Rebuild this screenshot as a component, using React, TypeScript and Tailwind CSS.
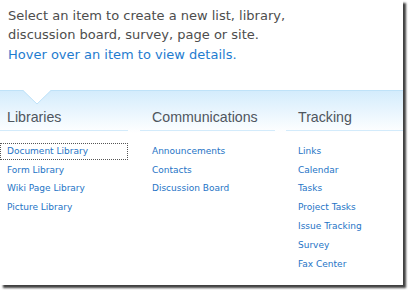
const libraries = ["Document Library", "Form Library", "Wiki Page Library", "Picture Library"];
const communications = ["Announcements", "Contacts", "Discussion Board"];
const tracking = ["Links", "Calendar", "Tasks", "Project Tasks", "Issue Tracking", "Survey", "Fax Center"];

function Column({
  title,
  items,
  width,
  pad,
  linkPad,
  focusFirst,
}: {
  title: string;
  items: string[];
  width: string;
  pad: string;
  linkPad: string;
  focusFirst?: boolean;
}) {
  return (
    <div className={`${width} shrink-0`}>
      <div
        className={`h-[40px] flex items-end ${pad} pb-[4px] border-b border-[#d3ebfb] text-[14.2px] leading-[18px] text-[#4f565e]`}
        style={{ fontFamily: '"Liberation Sans", Arial, sans-serif' }}
      >
        {title}
      </div>
      <ul className="pt-[12px]">
        {items.map((item, i) => (
          <li
            key={item}
            className={`h-[17px] mb-[1.8px] ${linkPad} flex items-center text-[9px] text-[#2574c6] border ${
              focusFirst && i === 0 ? "border-dotted border-[#555]" : "border-transparent"
            }`}
          >
            {item}
          </li>
        ))}
      </ul>
    </div>
  );
}

export default function App() {
  return (
    <div className="w-[408px] h-[290px] bg-white overflow-hidden" style={{ fontFamily: '"DejaVu Sans", Verdana, sans-serif' }}>
      <div className="relative w-[403px] h-[285px] bg-white shadow-[3px_3px_2px_rgba(0,0,0,0.75)]">
        <div className="h-[90px] pl-[8px] pt-[6px] text-[13px] leading-[19.3px] text-[#4d4d4d]">
          <p>Select an item to create a new list, library,</p>
          <p>discussion board, survey, page or site.</p>
          <p className="text-[#1e7ccf]">Hover over an item to view details.</p>
        </div>
        <div className="relative border-t border-[#bfe2f8] bg-gradient-to-b from-[#d4ecfc] to-white to-[42px] bg-no-repeat">
          {/* pointer notch */}
          <svg className="absolute left-[23px] top-[-1px]" width="28" height="15" viewBox="0 0 28 15">
            <path d="M0 0 L14 14 L28 0 Z" fill="white" />
            <path d="M0 0.5 L14 14 L28 0.5" fill="none" stroke="#bfe2f8" strokeWidth="1" />
          </svg>
          <div className="flex">
            <Column title="Libraries" items={libraries} width="w-[128px]" pad="pl-[7px]" linkPad="pl-[6px]" focusFirst />
            <div className="w-[12px] shrink-0" />
            <Column title="Communications" items={communications} width="w-[135px]" pad="pl-[12px]" linkPad="pl-[11px]" />
            <div className="w-[11px] shrink-0" />
            <Column title="Tracking" items={tracking} width="w-[117px]" pad="pl-[12px]" linkPad="pl-[11px]" />
          </div>
        </div>
      </div>
    </div>
  );
}
